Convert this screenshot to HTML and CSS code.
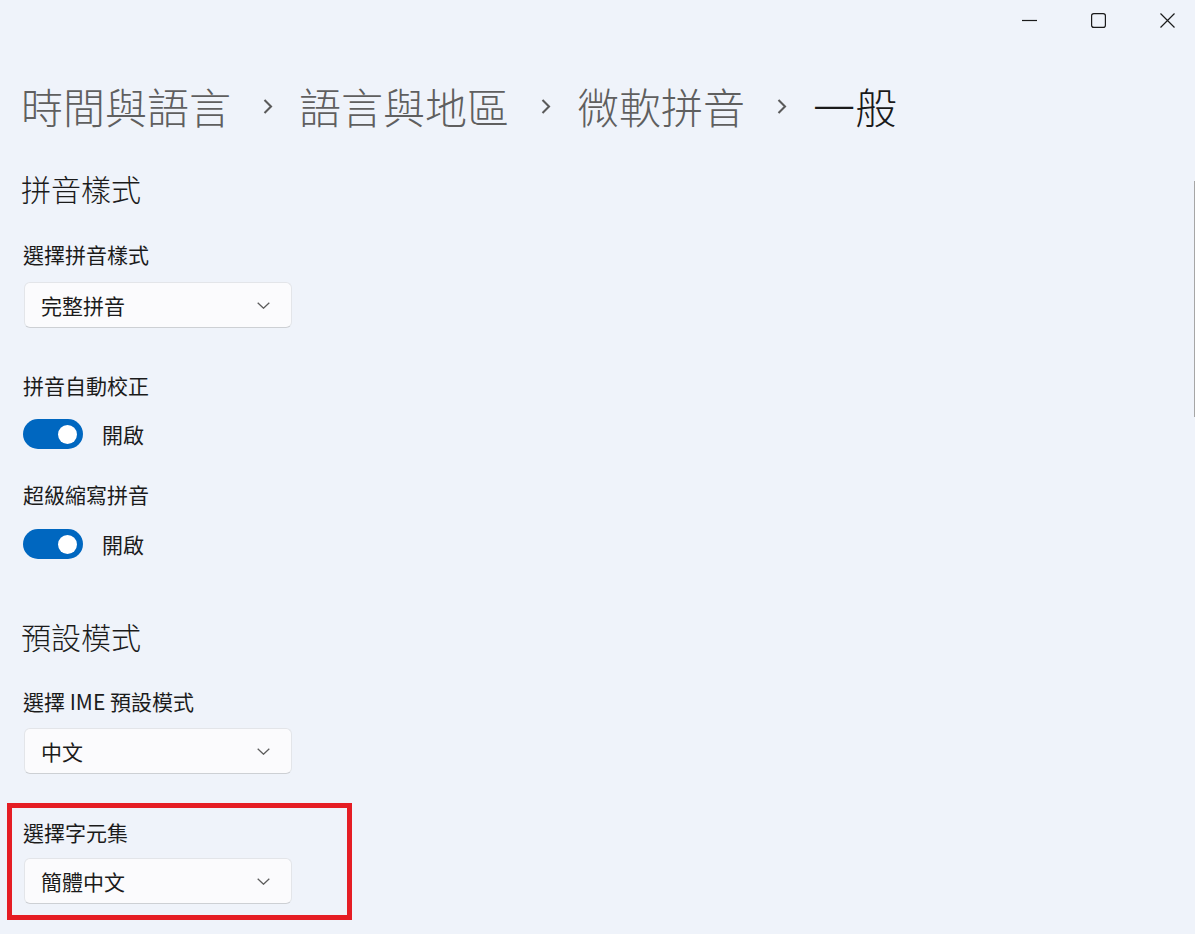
FILE: index.html
```html
<!DOCTYPE html>
<html lang="zh-Hant">
<head>
<meta charset="utf-8">
<title>微軟拼音 一般</title>
<link rel="stylesheet" href="styles.css">
</head>
<body>
<div class="titlebar">
  <svg class="cap-icon" viewBox="0 0 15 15" width="15" height="15"><path d="M0 7.5 H15" stroke="#1b1b1b" stroke-width="1.2" fill="none"/></svg>
  <svg class="cap-icon" viewBox="0 0 15 15" width="15" height="15"><rect x="0.6" y="0.6" width="13.8" height="13.8" rx="2.2" stroke="#1b1b1b" stroke-width="1.2" fill="none"/></svg>
  <svg class="cap-icon" viewBox="0 0 15 15" width="15" height="15"><path d="M0.5 0.5 L14.5 14.5 M14.5 0.5 L0.5 14.5" stroke="#1b1b1b" stroke-width="1.2" fill="none"/></svg>
</div>

<div class="scrollbar"></div>

<main class="content">
  <nav class="breadcrumb">
    <span class="crumb">時間與語言</span>
    <svg class="crumb-sep" viewBox="0 0 10 15" width="10" height="15"><path d="M1.5 1 L8 7.5 L1.5 14" stroke="#5a5a5a" stroke-width="2.1" fill="none"/></svg>
    <span class="crumb">語言與地區</span>
    <svg class="crumb-sep" viewBox="0 0 10 15" width="10" height="15"><path d="M1.5 1 L8 7.5 L1.5 14" stroke="#5a5a5a" stroke-width="2.1" fill="none"/></svg>
    <span class="crumb">微軟拼音</span>
    <svg class="crumb-sep" viewBox="0 0 10 15" width="10" height="15"><path d="M1.5 1 L8 7.5 L1.5 14" stroke="#5a5a5a" stroke-width="2.1" fill="none"/></svg>
    <span class="crumb current">一般</span>
  </nav>

  <h2 class="section-title first">拼音樣式</h2>

  <div class="field-label first-label">選擇拼音樣式</div>
  <div class="dropdown">
    <span>完整拼音</span>
    <svg class="chev" viewBox="0 0 13 7" width="13" height="7"><path d="M0.7 0.7 L6.5 6.2 L12.3 0.7" stroke="#5c5c5c" stroke-width="1.3" fill="none"/></svg>
  </div>

  <div class="field-label after-dropdown">拼音自動校正</div>
  <div class="toggle-row">
    <div class="toggle"><span class="knob"></span></div>
    <span class="toggle-text">開啟</span>
  </div>

  <div class="field-label after-toggle">超級縮寫拼音</div>
  <div class="toggle-row second">
    <div class="toggle"><span class="knob"></span></div>
    <span class="toggle-text">開啟</span>
  </div>

  <h2 class="section-title second">預設模式</h2>

  <div class="field-label first-label-2">選擇 IME 預設模式</div>
  <div class="dropdown tight">
    <span>中文</span>
    <svg class="chev" viewBox="0 0 13 7" width="13" height="7"><path d="M0.7 0.7 L6.5 6.2 L12.3 0.7" stroke="#5c5c5c" stroke-width="1.3" fill="none"/></svg>
  </div>

  <section class="highlight">
    <div class="field-label">選擇字元集</div>
    <div class="dropdown tighter">
      <span>簡體中文</span>
      <svg class="chev" viewBox="0 0 13 7" width="13" height="7"><path d="M0.7 0.7 L6.5 6.2 L12.3 0.7" stroke="#5c5c5c" stroke-width="1.3" fill="none"/></svg>
    </div>
  </section>
</main>
</body>
</html>
```

FILE: styles.css
```css
html, body {
  margin: 0;
  padding: 0;
}

body {
  width: 1195px;
  height: 934px;
  overflow: hidden;
  position: relative;
  background: #eff3fa;
  color: #1b1b1b;
  font-family: "Noto Sans CJK TC", "Noto Sans", sans-serif;
}

.titlebar {
  height: 41px;
  display: flex;
  justify-content: flex-end;
  align-items: center;
  gap: 54px;
  padding-right: 20px;
}

.cap-icon {
  display: block;
}

.scrollbar {
  position: absolute;
  left: 1194px;
  top: 181px;
  width: 1px;
  height: 236px;
  background: #a6a6a6;
}

.content {
  padding-left: 21px;
}

.breadcrumb {
  margin-top: 37px;
  height: 56px;
  display: flex;
  align-items: center;
  font-size: 42px;
  line-height: 56px;
  font-weight: 300;
  color: #5f5f5f;
  white-space: nowrap;
}

.crumb.current {
  color: #1a1a1a;
}

.crumb-sep {
  display: block;
  margin: 0 26px 0 32px;
}

.section-title {
  margin: 0;
  font-size: 30px;
  line-height: 40px;
  font-weight: 300;
  color: #1b1b1b;
}

.section-title.first {
  margin-top: 34px;
}

.section-title.second {
  margin-top: 57px;
}

.field-label {
  margin-left: 2px;
  font-size: 21px;
  line-height: 30px;
  color: #1b1b1b;
}

.first-label {
  margin-top: 31px;
}

.first-label-2 {
  margin-top: 30px;
}

.after-dropdown {
  margin-top: 42px;
}

.after-toggle {
  margin-top: 30px;
}

.dropdown {
  box-sizing: border-box;
  margin-top: 13px;
  margin-left: 3px;
  width: 268px;
  height: 46px;
  display: flex;
  align-items: center;
  justify-content: space-between;
  padding: 0 21px 0 16px;
  background: #fbfbfd;
  border: 1px solid #e3e5e9;
  border-bottom-color: #cdd0d4;
  border-radius: 6px;
  font-size: 21px;
  line-height: 30px;
  color: #1b1b1b;
}

.dropdown.tight {
  margin-top: 12px;
}

.dropdown.tighter {
  margin-top: 11px;
}

.chev {
  display: block;
}

.toggle-row {
  margin-top: 19px;
  margin-left: 2px;
  display: flex;
  align-items: center;
  gap: 19px;
}

.toggle-row.second {
  margin-top: 20px;
}

.toggle {
  box-sizing: border-box;
  width: 60px;
  height: 30px;
  border-radius: 15px;
  background: #0067c0;
  display: flex;
  align-items: center;
  justify-content: flex-end;
  padding-right: 6px;
}

.knob {
  display: block;
  width: 19px;
  height: 19px;
  border-radius: 50%;
  background: #ffffff;
}

.toggle-text {
  font-size: 21px;
  line-height: 30px;
  color: #1b1b1b;
}

.highlight {
  box-sizing: border-box;
  margin-top: 29px;
  margin-left: -14px;
  width: 345px;
  border: 5px solid #e51d24;
  padding: 9px 0 11px 9px;
}
```
